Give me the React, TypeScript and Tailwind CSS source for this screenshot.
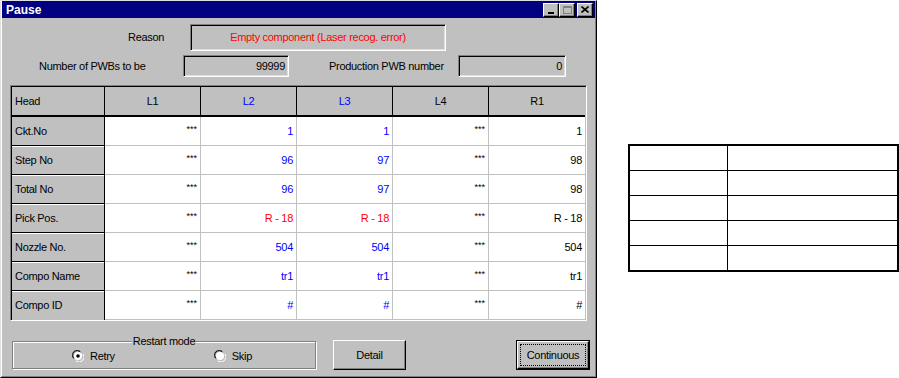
import React from "react";

const rows = [
  { label: "Ckt.No", l2: "1", l3: "1", r1: "1", color: "text-[#0000ff]" },
  { label: "Step No", l2: "96", l3: "97", r1: "98", color: "text-[#0000ff]" },
  { label: "Total No", l2: "96", l3: "97", r1: "98", color: "text-[#0000ff]" },
  { label: "Pick Pos.", l2: "R - 18", l3: "R - 18", r1: "R - 18", color: "text-[#ff0000]" },
  { label: "Nozzle No.", l2: "504", l3: "504", r1: "504", color: "text-[#0000ff]" },
  { label: "Compo Name", l2: "tr1", l3: "tr1", r1: "tr1", color: "text-[#0000ff]" },
  { label: "Compo ID", l2: "#", l3: "#", r1: "#", color: "text-[#0000ff]" },
];

function Sunken({ className, children }: { className: string; children?: React.ReactNode }) {
  return (
    <div
      className={`border border-t-[#808080] border-l-[#808080] border-r-white border-b-white shadow-[inset_1px_1px_0_#000,inset_-1px_-1px_0_#dfdfdf] bg-[#c0c0c0] flex items-center ${className}`}
    >
      {children}
    </div>
  );
}

function TitleButton({ children }: { children: React.ReactNode }) {
  return (
    <div className="w-[16px] h-[14px] bg-[#c0c0c0] border border-t-white border-l-white border-r-black border-b-black shadow-[inset_-1px_-1px_0_#808080] flex items-center justify-center">
      {children}
    </div>
  );
}

function Radio({ checked }: { checked?: boolean }) {
  return (
    <svg width="12" height="12" viewBox="0 0 12 12">
      <path d="M1 8 A5 5 0 0 1 8 1" fill="none" stroke="#808080" strokeWidth="1" />
      <path d="M2 8.5 A4.2 4.2 0 0 1 8.5 2" fill="none" stroke="#000" strokeWidth="1" />
      <path d="M4 11 A5 5 0 0 0 11 4" fill="none" stroke="#fff" strokeWidth="1" />
      <circle cx="6" cy="6" r="4" fill="#fff" />
      {checked && <circle cx="6" cy="6" r="1.8" fill="#000" />}
    </svg>
  );
}

export default function App() {
  return (
    <div className="w-[899px] h-[378px] bg-white flex font-['Liberation_Sans',Arial,sans-serif] text-[11px] text-black tracking-[-0.3px]">
      {/* Dialog window */}
      <div className="w-[597px] h-[378px] bg-[#c0c0c0] border border-t-[#dfdfdf] border-l-[#dfdfdf] border-r-black border-b-black">
        <div className="h-full border border-t-transparent border-l-white border-r-[#808080] border-b-[#808080] border-t-0 flex flex-col">
          {/* Title bar */}
          <div className="h-[17px] bg-[#000080] flex items-center justify-between pl-[4px] pr-[2px]">
            <span className="text-white font-bold text-[12px] tracking-normal">Pause</span>
            <div className="flex items-center">
              <TitleButton>
                <div className="w-[6px] h-[2px] bg-black mt-[6px] mr-[1px]" />
              </TitleButton>
              <TitleButton>
                <div className="w-[9px] h-[8px] border border-[#808080] border-t-2" />
              </TitleButton>
              <div className="w-[2px]" />
              <TitleButton>
                <svg width="8" height="7" viewBox="0 0 8 7">
                  <path d="M0.5 0.5 L7.5 6.5 M7.5 0.5 L0.5 6.5" stroke="#000" strokeWidth="1.6" />
                </svg>
              </TitleButton>
            </div>
          </div>

          {/* Reason */}
          <div className="flex items-center mt-[6px]">
            <span className="ml-[126px] w-[62px]">Reason</span>
            <Sunken className="w-[256px] h-[27px] justify-center text-[#ff0000]">
              Empty component (Laser recog. error)
            </Sunken>
          </div>

          {/* Counters */}
          <div className="flex items-center mt-[4px]">
            <span className="ml-[37px] w-[144px]">Number of PWBs to be</span>
            <Sunken className="w-[106px] h-[22px] justify-end pr-[3px]">99999</Sunken>
            <span className="ml-[40px] w-[129px]">Production PWB number</span>
            <Sunken className="w-[108px] h-[22px] justify-end pr-[3px]">0</Sunken>
          </div>

          {/* Table */}
          <div className="ml-[8px] mt-[8px] w-[577px] border border-t-[#808080] border-l-[#808080] border-r-white border-b-white">
            <div className="border-t border-l border-black">
              <div className="grid grid-cols-[93px_repeat(5,96px)]">
                <div className="h-[30px] bg-[#c0c0c0] border-r border-b-2 border-black flex items-center pl-[3px]">Head</div>
                <div className="h-[30px] bg-[#c0c0c0] border-r border-b-2 border-black flex items-center justify-center">L1</div>
                <div className="h-[30px] bg-[#c0c0c0] border-r border-b-2 border-black flex items-center justify-center text-[#0000ff]">L2</div>
                <div className="h-[30px] bg-[#c0c0c0] border-r border-b-2 border-black flex items-center justify-center text-[#0000ff]">L3</div>
                <div className="h-[30px] bg-[#c0c0c0] border-r border-b-2 border-black flex items-center justify-center">L4</div>
                <div className="h-[30px] bg-[#c0c0c0] border-b-2 border-black flex items-center justify-center">R1</div>
                {rows.map((r, i) => (
                  <React.Fragment key={r.label}>
                    <div
                      className={`h-[29px] bg-[#c0c0c0] border-r border-black flex items-center pl-[3px] ${i < rows.length - 1 ? "border-b" : ""} ${i > 0 ? "shadow-[inset_0_1px_0_#fff]" : ""}`}
                    >
                      {r.label}
                    </div>
                    <div className="h-[29px] bg-white border-r border-b border-[#c0c0c0] flex items-center justify-end pr-[3px] pb-[3px] text-[9px] tracking-normal">***</div>
                    <div className={`h-[29px] bg-white border-r border-b border-[#c0c0c0] flex items-center justify-end pr-[3px] ${r.color}`}>{r.l2}</div>
                    <div className={`h-[29px] bg-white border-r border-b border-[#c0c0c0] flex items-center justify-end pr-[3px] ${r.color}`}>{r.l3}</div>
                    <div className="h-[29px] bg-white border-r border-b border-[#c0c0c0] flex items-center justify-end pr-[3px] pb-[3px] text-[9px] tracking-normal">***</div>
                    <div className="h-[29px] bg-white border-b border-[#c0c0c0] flex items-center justify-end pr-[3px]">{r.r1}</div>
                  </React.Fragment>
                ))}
              </div>
            </div>
          </div>

          {/* Bottom controls */}
          <div className="flex items-start mt-[19px]">
            <div className="relative ml-[10px] mt-[1px] w-[304px] h-[28px] border border-[#808080] shadow-[inset_1px_1px_0_#fff,1px_1px_0_#fff] flex items-center pt-[2px]">
              <span className="absolute left-1/2 -translate-x-1/2 -top-[8px] bg-[#c0c0c0] px-[1px] leading-[14px]">Restart mode</span>
              <div className="flex items-center ml-[59px] gap-[6px]">
                <Radio checked />
                <span>Retry</span>
              </div>
              <div className="flex items-center ml-[99px] gap-[6px]">
                <Radio />
                <span>Skip</span>
              </div>
            </div>
            <div className="ml-[17px] w-[73px] h-[30px] bg-[#c0c0c0] border border-t-white border-l-white border-r-black border-b-black shadow-[inset_-1px_-1px_0_#808080] flex items-center justify-center">
              Detail
            </div>
            <div className="ml-[110px] w-[74px] h-[30px] border border-black">
              <div className="h-full bg-[#c0c0c0] border border-t-white border-l-white border-r-black border-b-black shadow-[inset_-1px_-1px_0_#808080] p-[2px]">
                <div className="h-full border border-dotted border-black flex items-center justify-center">Continuous</div>
              </div>
            </div>
          </div>
        </div>
      </div>

      {/* Blank table on the right */}
      <div className="ml-[31px] mt-[144px] w-[271px] h-[128px] border-2 border-black flex flex-col">
        {[0, 1, 2, 3, 4].map((i) => (
          <div key={i} className={`flex ${i < 4 ? "h-[25px] border-b border-black" : "h-[24px]"}`}>
            <div className="w-[98px] border-r border-black" />
            <div className="flex-1" />
          </div>
        ))}
      </div>
    </div>
  );
}
